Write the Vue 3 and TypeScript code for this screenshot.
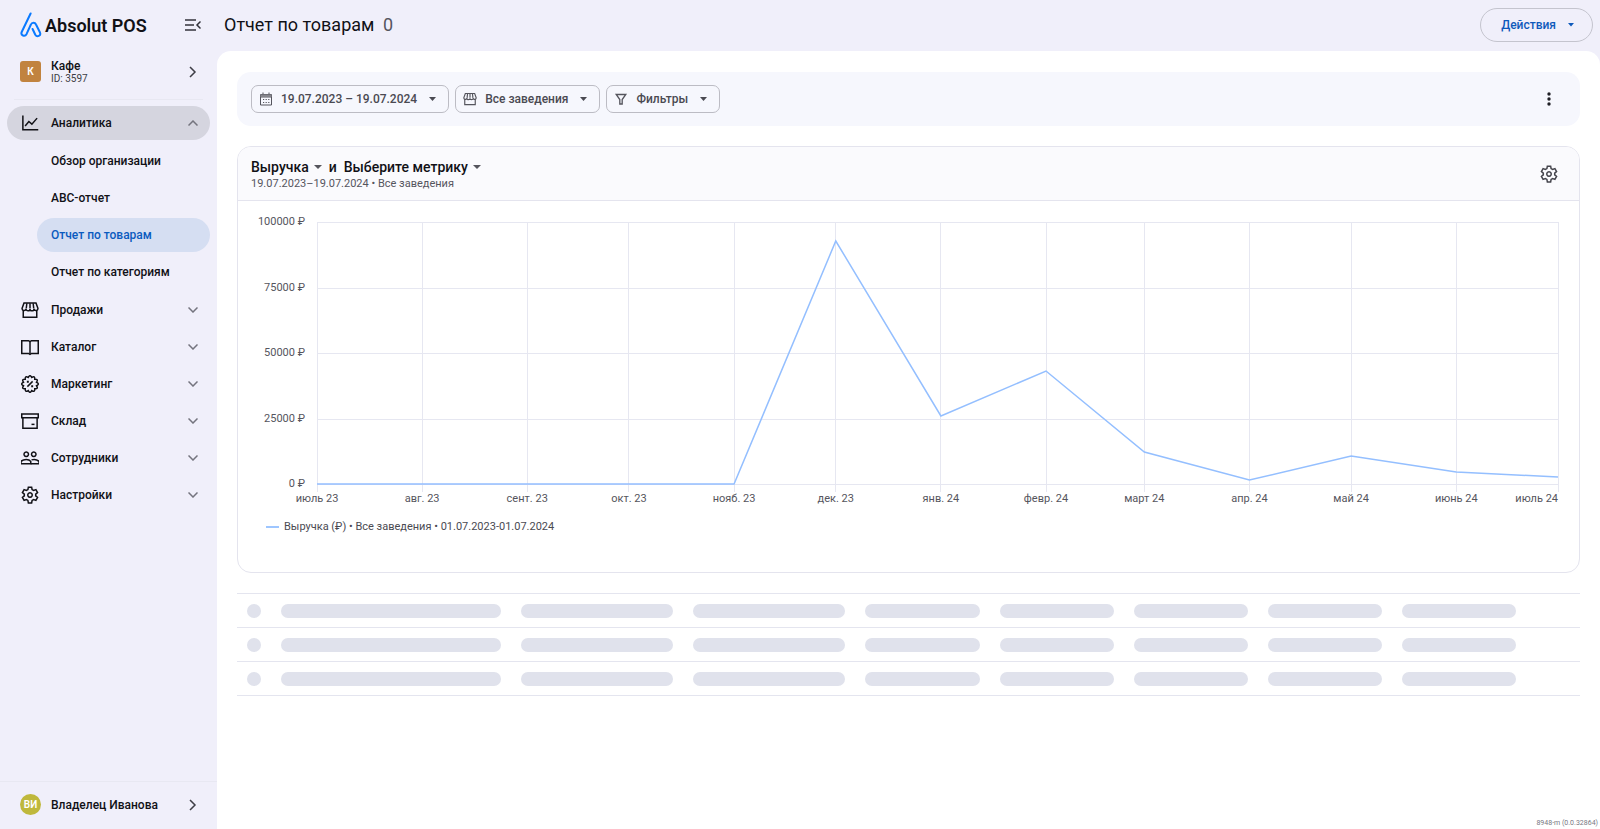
<script setup lang="ts">
type IconName = 'chart' | 'store' | 'book' | 'promo' | 'box' | 'people' | 'gear'

interface NavItem {
  label: string
  icon: IconName
  children?: string[]
}

interface Point {
  label: string
  day: number
  value: number
}

const nav: NavItem[] = [
  {
    label: 'Аналитика',
    icon: 'chart',
    children: ['Обзор организации', 'АВС-отчет', 'Отчет по товарам', 'Отчет по категориям'],
  },
  { label: 'Продажи', icon: 'store' },
  { label: 'Каталог', icon: 'book' },
  { label: 'Маркетинг', icon: 'promo' },
  { label: 'Склад', icon: 'box' },
  { label: 'Сотрудники', icon: 'people' },
  { label: 'Настройки', icon: 'gear' },
]
const activePage = 'Отчет по товарам'

const gearPath =
  'M9.8 1.5h4.4l.6 3.300 2 1.200 3.100-1.200 2.200 3.900-2.500 2.100v2.400l2.500 2.100-2.200 3.900-3.100-1.200-2 1.200-.6 3.300H9.800l-.6-3.300-2-1.200-3.100 1.200-2.200-3.900 2.500-2.100v-2.400L1.900 8.700l2.200-3.900L7.200 6l2-1.200z'

// Scalloped badge outline: twelve lobes around a circle.
const sealPath = (() => {
  const lobes = 12
  let d = ''
  for (let i = 0; i <= lobes; i++) {
    const a = (i / lobes) * Math.PI * 2 + Math.PI / lobes
    const x = (12 + 9 * Math.cos(a)).toFixed(2)
    const y = (12 + 9 * Math.sin(a)).toFixed(2)
    if (i === 0) {
      d = `M${x} ${y}`
    } else {
      const m = a - Math.PI / lobes
      const cx = (12 + 13.5 * Math.cos(m)).toFixed(2)
      const cy = (12 + 13.5 * Math.sin(m)).toFixed(2)
      d += `Q${cx} ${cy} ${x} ${y}`
    }
  }
  return d + 'z'
})()

const icons: Record<IconName, string[]> = {
  chart: ['M2.500 2v19H23', 'M5.500 16l5-6 4 3.500L21.500 5.500'],
  store: [
    'M3 12v9.500h18V12',
    'M4 2.500h16l2.500 7a2.600 2.600 0 0 1-5.200 1 2.600 2.600 0 0 1-5.300 0 2.600 2.600 0 0 1-5.300 0 2.600 2.600 0 0 1-5.200-1z',
    'M12 3v7M7.800 3L7 10M16.200 3l.8 7',
  ],
  book: ['M1 3.500H10l2 1.200L14 3.500h9v17h-9l-2 1.200-2-1.200H1z', 'M12 5v16'],
  promo: [sealPath, 'M8.500 15.500l7-7', 'M8.800 8.800h.6v.6h-.6zM14.600 14.600h.6v.6h-.6z'],
  box: ['M1 2.500h22v5H1z', 'M2.500 7.500v14h19v-14', 'M14 16.500h4'],
  people: [
    'M7 4a3 3 0 1 0 .01 0zM17 4a3 3 0 1 0 .01 0z',
    'M0 19.500v-3C2 14.500 4.500 14 7 14s4.500.5 6 2.500v3z',
    'M14 14.500c4-1 8 0 10 2v3H13',
  ],
  gear: [gearPath, 'M12 9a3 3 0 1 0 .01 0z'],
}

const points: Point[] = [
  { label: 'июль 23', day: 0, value: 0 },
  { label: 'авг. 23', day: 31, value: 0 },
  { label: 'сент. 23', day: 62, value: 0 },
  { label: 'окт. 23', day: 92, value: 0 },
  { label: 'нояб. 23', day: 123, value: 0 },
  { label: 'дек. 23', day: 153, value: 92700 },
  { label: 'янв. 24', day: 184, value: 26000 },
  { label: 'февр. 24', day: 215, value: 43300 },
  { label: 'март 24', day: 244, value: 12400 },
  { label: 'апр. 24', day: 275, value: 1500 },
  { label: 'май 24', day: 305, value: 10500 },
  { label: 'июнь 24', day: 336, value: 4500 },
  { label: 'июль 24', day: 366, value: 2700 },
]
const days = 366
const maxValue = 100000
const yTicks = [100000, 75000, 50000, 25000, 0]

const xPct = (p: Point): string => `${((p.day / days) * 100).toFixed(3)}%`
const plotHeight = 262
const yPos = (v: number): number => Math.round(plotHeight * (1 - v / maxValue))
const linePoints = points.map((p) => `${p.day},${yPos(p.value)}`).join(' ')
const anchor = (i: number): string => (i === points.length - 1 ? 'end' : 'middle')
</script>

<template>
  <div class="app">
    <aside class="sidebar">
      <div class="brand">
        <a href="#" class="logo">
          <svg width="22" height="26" viewBox="0 0 22 26" aria-hidden="true">
            <path
              d="M10.600 1.500L1.700 20c-1.400 3.400 3.200 5.200 4.800 2.200L10.900 12.500c1-2.500 4-2.500 5.100 0l4 8c1.300 3.300-3 5-4.700 2.200L12.600 17"
              fill="none" stroke="#0a7aff" stroke-width="2" stroke-linecap="round" stroke-linejoin="round"
            />
          </svg>
          <span>Absolut POS</span>
        </a>
        <button type="button" class="icon-btn" aria-label="Свернуть меню">
          <svg width="16" height="12" viewBox="0 0 16 12" aria-hidden="true">
            <path d="M0 1h11M0 6h9M0 11h11M15.500 2.500L12 6l3.500 3.500" fill="none" stroke="#33333b" stroke-width="1.500" />
          </svg>
        </button>
      </div>

      <button type="button" class="row-btn venue">
        <span class="avatar square">К</span>
        <span class="row-text"><b>Кафе</b><small>ID: 3597</small></span>
        <svg class="chev" width="8" height="12" viewBox="0 0 8 12" aria-hidden="true">
          <path d="M1 1l5 5-5 5" />
        </svg>
      </button>

      <nav class="nav">
        <template v-for="item in nav" :key="item.label">
          <button type="button" class="nav-item" :class="{ open: item.children }" :aria-expanded="!!item.children">
            <svg class="nav-icon" width="18" height="18" viewBox="0 0 24 24" aria-hidden="true">
              <path v-for="d in icons[item.icon]" :key="d" :d="d" />
            </svg>
            <span>{{ item.label }}</span>
            <svg class="arrow" width="10" height="6" viewBox="0 0 10 6" aria-hidden="true">
              <path :d="item.children ? 'M.5 5.500L5 1l4.500 4.500' : 'M.5.5L5 5 9.500.5'" />
            </svg>
          </button>
          <div v-if="item.children" class="sub">
            <a
              v-for="child in item.children" :key="child" href="#"
              class="sub-item" :class="{ active: child === activePage }"
            >{{ child }}</a>
          </div>
        </template>
      </nav>

      <button type="button" class="row-btn user">
        <span class="avatar round">ВИ</span>
        <span class="row-text"><b>Владелец Иванова</b></span>
        <svg class="chev" width="8" height="12" viewBox="0 0 8 12" aria-hidden="true">
          <path d="M1 1l5 5-5 5" />
        </svg>
      </button>
    </aside>

    <div class="content">
      <header class="topbar">
        <h1>Отчет по товарам <span>0</span></h1>
        <button type="button" class="actions">
          Действия
          <svg width="6" height="4" viewBox="0 0 6 4" aria-hidden="true"><path d="M0 0h6L3 3.500z" fill="currentColor" /></svg>
        </button>
      </header>

      <main class="panel">
        <div class="filters">
          <button type="button" class="chip">
            <svg width="14" height="14" viewBox="0 0 14 14" aria-hidden="true">
              <path d="M1.500 2.500h11v10.500h-11zM1.500 5h11M4 .5v2M10 .5v2" />
              <path d="M1.500 2.500h11V5h-11z" fill="#85858c" stroke="none" />
              <path d="M4 7.500h6.500M4 10.500h6.500" stroke-dasharray="1.200 1.400" />
            </svg>
            <span>19.07.2023 – 19.07.2024</span>
            <svg class="caret" width="7" height="4" viewBox="0 0 7 4" aria-hidden="true"><path d="M0 0h7L3.500 4z" /></svg>
          </button>
          <button type="button" class="chip">
            <svg width="14" height="14" viewBox="0 0 24 24" stroke-width="2" aria-hidden="true">
              <path v-for="d in icons.store" :key="d" :d="d" />
            </svg>
            <span>Все заведения</span>
            <svg class="caret" width="7" height="4" viewBox="0 0 7 4" aria-hidden="true"><path d="M0 0h7L3.500 4z" /></svg>
          </button>
          <button type="button" class="chip">
            <svg width="14" height="14" viewBox="0 0 14 14" stroke-width="1.300" aria-hidden="true">
              <path d="M2.200 2.500h9.600L8.200 7.500V12H5.800V7.500z" />
            </svg>
            <span>Фильтры</span>
            <svg class="caret" width="7" height="4" viewBox="0 0 7 4" aria-hidden="true"><path d="M0 0h7L3.500 4z" /></svg>
          </button>
          <button type="button" class="icon-btn push" aria-label="Ещё">
            <svg width="4" height="14" viewBox="0 0 4 14" fill="#202026" aria-hidden="true">
              <circle cx="2" cy="2" r="1.700" /><circle cx="2" cy="7" r="1.700" /><circle cx="2" cy="12" r="1.700" />
            </svg>
          </button>
        </div>

        <section class="card">
          <div class="card-head">
            <div>
              <div class="metrics">
                <button type="button" class="metric">
                  Выручка
                  <svg width="8" height="4" viewBox="0 0 8 4" aria-hidden="true"><path d="M0 0h8L4 4z" /></svg>
                </button>
                <span>и</span>
                <button type="button" class="metric">
                  Выберите метрику
                  <svg width="8" height="4" viewBox="0 0 8 4" aria-hidden="true"><path d="M0 0h8L4 4z" /></svg>
                </button>
              </div>
              <p class="period">19.07.2023–19.07.2024 • Все заведения</p>
            </div>
            <button type="button" class="icon-btn push" aria-label="Настройки графика">
              <svg class="gear" width="18" height="18" viewBox="0 0 24 24" aria-hidden="true">
                <path v-for="d in icons.gear" :key="d" :d="d" />
              </svg>
            </button>
          </div>

          <div class="chart">
            <svg class="plot" role="img" aria-label="Выручка по месяцам">
              <g class="grid">
                <line v-for="t in yTicks" :key="t" x1="0" x2="100%" :y1="yPos(t)" :y2="yPos(t)" />
                <line v-for="p in points" :key="p.day" :x1="xPct(p)" :x2="xPct(p)" y1="0" y2="270" />
              </g>
              <svg width="100%" height="262" viewBox="0 0 366 262" preserveAspectRatio="none" overflow="visible">
                <polyline class="line" :points="linePoints" vector-effect="non-scaling-stroke" />
              </svg>
              <g class="tick">
                <text v-for="t in yTicks" :key="t" x="-12" :y="yPos(t) + 3" text-anchor="end">{{ t }} ₽</text>
                <text v-for="(p, i) in points" :key="p.day" :x="xPct(p)" y="280" :text-anchor="anchor(i)">{{ p.label }}</text>
              </g>
            </svg>
            <div class="legend"><i></i>Выручка (₽) • Все заведения • 01.07.2023-01.07.2024</div>
          </div>
        </section>

        <div class="skeleton" aria-busy="true">
          <div v-for="r in 3" :key="r" class="sk-row">
            <span v-for="c in 9" :key="c" class="sk-cell"></span>
          </div>
        </div>

        <footer class="version">8948-m (0.0.32864)</footer>
      </main>
    </div>
  </div>
</template>

<style>
body {
  margin: 0;
}
</style>

<style scoped>
.app {
  display: flex;
  min-height: 100vh;
  background: #f0effa;
  color: #111116;
  font-family: Roboto, 'Noto Sans', sans-serif;
  font-size: 12px;
  line-height: 16px;
}
.app * {
  box-sizing: border-box;
}
button {
  margin: 0;
  padding: 0;
  border: 0;
  background: none;
  color: inherit;
  font: inherit;
  text-align: left;
  cursor: pointer;
}
a {
  color: inherit;
  text-decoration: none;
}
svg {
  flex: none;
  display: block;
}
.icon-btn {
  display: flex;
  align-items: center;
  justify-content: center;
}

/* Sidebar */
.sidebar {
  display: flex;
  flex-direction: column;
  flex: none;
  width: 217px;
}
.brand {
  display: flex;
  align-items: center;
  justify-content: space-between;
  height: 49px;
  padding: 0 16px 0 20px;
}
.logo {
  display: flex;
  align-items: center;
  gap: 3px;
  font-size: 18px;
  font-weight: 600;
  line-height: 24px;
}
.logo span {
  padding-top: 3px;
}
.row-btn {
  display: flex;
  align-items: center;
  gap: 10px;
}
.venue {
  height: 51px;
  margin: 0 14px;
  padding: 0 6px 5px;
  border-bottom: 1px solid #e8e8f2;
}
.avatar {
  display: grid;
  place-items: center;
  width: 21px;
  height: 21px;
  color: #fff;
  font-size: 10px;
  font-weight: 600;
}
.square {
  border-radius: 3px;
  background: #c1833f;
}
.round {
  border-radius: 50%;
  background: #bfb83c;
}
.row-text {
  display: flex;
  flex-direction: column;
  flex: 1;
}
.row-text b {
  font-size: 12px;
  font-weight: 500;
  line-height: 14px;
}
.row-text small {
  color: #3c3c44;
  font-size: 10px;
  line-height: 11px;
}
.chev {
  fill: none;
  stroke: #3e3e46;
  stroke-width: 1.5;
}
.nav {
  display: flex;
  flex-direction: column;
  gap: 3px;
  padding: 6px 7px;
}
.nav-item {
  display: flex;
  align-items: center;
  gap: 12px;
  height: 34px;
  padding: 0 12px 0 14px;
  border-radius: 17px;
  font-weight: 500;
}
.nav-item.open {
  background: #d5d5df;
}
.nav-item span {
  flex: 1;
}
.nav-icon {
  fill: none;
  stroke: #111116;
  stroke-width: 2;
}
.arrow {
  fill: none;
  stroke: #74747e;
  stroke-width: 1.5;
}
.sub {
  display: flex;
  flex-direction: column;
  gap: 3px;
  padding: 1px 0;
}
.sub-item {
  height: 34px;
  margin-left: 30px;
  padding: 0 14px;
  border-radius: 17px;
  font-weight: 500;
  line-height: 34px;
}
.sub-item.active {
  background: #d5def2;
  color: #0b5bbf;
}
.user {
  height: 48px;
  margin-top: auto;
  padding: 0 20px 2px;
  border-top: 1px solid #e8e8f2;
}

/* Header */
.content {
  display: flex;
  flex-direction: column;
  flex: 1;
  min-width: 0;
}
.topbar {
  display: flex;
  align-items: center;
  justify-content: space-between;
  height: 51px;
  padding: 0 7px 2px;
}
h1 {
  margin: 0;
  font-size: 18px;
  font-weight: 400;
  line-height: 24px;
}
h1 span {
  margin-left: 4px;
  color: #55555e;
}
.actions {
  display: flex;
  align-items: center;
  gap: 12px;
  height: 34px;
  padding: 0 18px 0 20px;
  border: 1px solid #c4c4ce;
  border-radius: 17px;
  color: #0f5abb;
  font-weight: 500;
}

/* Main panel */
.panel {
  display: flex;
  flex-direction: column;
  flex: 1;
  padding: 21px 20px 0;
  border-radius: 14px 14px 0 0;
  background: #fff;
}
.filters {
  display: flex;
  align-items: center;
  gap: 6px;
  height: 54px;
  padding: 0 15px 0 14px;
  border-radius: 14px;
  background: #f6f7fd;
}
.chip {
  display: flex;
  align-items: center;
  gap: 8px;
  height: 28px;
  padding: 0 12px 0 7px;
  border: 1px solid #bcbcc4;
  border-radius: 7px;
  color: #4a4a52;
  font-weight: 500;
}
.chip svg {
  fill: none;
  stroke: #55555d;
}
.chip .caret {
  margin-left: 4px;
  fill: #4a4a52;
  stroke: none;
}
.push {
  width: 32px;
  height: 32px;
  margin-left: auto;
}
.card {
  margin-top: 20px;
  overflow: hidden;
  border: 1px solid #e4e4ee;
  border-radius: 14px;
}
.card-head {
  display: flex;
  align-items: center;
  height: 54px;
  padding: 0 14px 0 13px;
  border-bottom: 1px solid #e4e4ee;
  background: #fafafd;
}
.metrics {
  display: flex;
  align-items: center;
  gap: 7px;
  padding-top: 2px;
  font-size: 14px;
  font-weight: 500;
  line-height: 18px;
}
.metric {
  display: flex;
  align-items: center;
  gap: 5px;
}
.metric svg {
  fill: #55555d;
}
.period {
  margin: 0;
  color: #55555d;
  font-size: 11px;
  line-height: 16px;
}
.gear {
  fill: none;
  stroke: #44444c;
  stroke-width: 2;
}

/* Chart */
.chart {
  padding: 21px 21px 37px 79px;
}
.plot {
  width: 100%;
  height: 290px;
  overflow: visible;
}
.grid line {
  stroke: #e6e7f1;
  stroke-width: 1;
  shape-rendering: crispEdges;
}
.line {
  fill: none;
  stroke: #94bfff;
  stroke-width: 1.5;
}
.tick text {
  fill: #55555d;
  font-size: 11px;
}
.legend {
  display: flex;
  align-items: center;
  gap: 5px;
  margin: 7px 0 0 -51px;
  color: #4a4a52;
  font-size: 11px;
}
.legend i {
  width: 13px;
  height: 2px;
  background: #9ec6ff;
}

/* Loading rows */
.skeleton {
  margin-top: 20px;
  border-top: 1px solid #e4e5ef;
}
.sk-row {
  display: grid;
  grid-template-columns: 34px 240fr 172fr 172fr repeat(5, 134fr) 54px;
  align-items: center;
  height: 34px;
  border-bottom: 1px solid #e4e5ef;
}
.sk-cell {
  height: 14px;
  margin: 0 10px;
  border-radius: 7px;
  background: #e0e2ec;
}
.version {
  margin: auto -18px 1px;
  color: #77777f;
  font-size: 7px;
  line-height: 10px;
  text-align: right;
}
</style>
